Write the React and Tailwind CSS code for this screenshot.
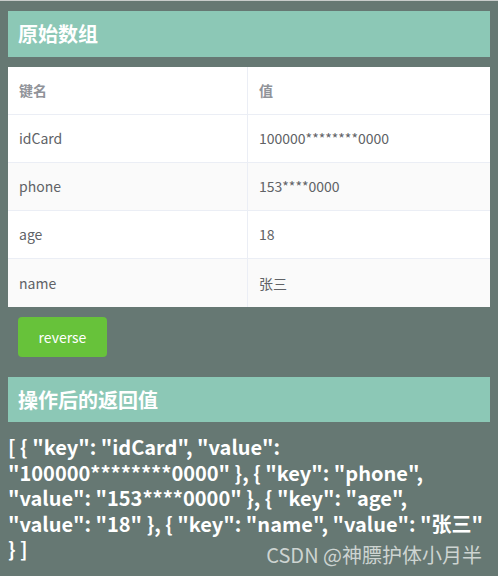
import React, { useState } from "react";

const initial = [
  { key: "idCard", value: "100000********0000" },
  { key: "phone", value: "153****0000" },
  { key: "age", value: "18" },
  { key: "name", value: "张三" },
];

const font = { fontFamily: '"Noto Sans CJK SC", "Noto Sans", sans-serif' };

const App = () => {
  const [list] = useState(initial);
  const [result, setResult] = useState(initial);

  const json = "[ " + result.map((r) => `{ "key": "${r.key}", "value": "${r.value}" }`).join(", ") + " ]";

  return (
    <div
      className="relative min-h-[576px] bg-[#667873] border-t border-[#c8cccb] px-2 pt-[10px]"
      style={font}
    >
      {/* Header */}
      <div className="h-[46px] bg-[#8cc8b6] flex items-center px-[10px]">
        <h2 className="text-[20px] font-bold text-white">原始数组</h2>
      </div>

      {/* Table */}
      <div className="mt-[10px] bg-white text-[14px]">
        <div className="flex h-12 border-b border-[#ebeef5]">
          <div className="w-[240px] border-r border-[#ebeef5] flex items-center px-[11px] font-bold text-[14px] text-[#909399]">
            键名
          </div>
          <div className="flex-1 flex items-center px-[11px] font-bold text-[14px] text-[#909399]">值</div>
        </div>
        {list.map((row, i) => (
          <div
            key={row.key}
            className={`flex h-12 ${i < list.length - 1 ? "border-b border-[#ebeef5]" : ""} ${i % 2 === 1 ? "bg-[#fafafa]" : "bg-white"}`}
          >
            <div className="w-[240px] border-r border-[#ebeef5] flex items-center px-[11px] text-[#606266]">
              {row.key}
            </div>
            <div className="flex-1 flex items-center px-[11px] text-[#606266]">{row.value}</div>
          </div>
        ))}
      </div>

      <div className="pl-[10px] pt-[10px]">
        <button
          onClick={() => setResult([...result].reverse())}
          className="w-[89px] h-10 rounded bg-[#67c23a] text-white text-[14px]"
        >
          reverse
        </button>
      </div>

      {/* Result header */}
      <div className="mt-5 h-[45px] bg-[#8cc8b6] flex items-center px-[10px]">
        <h2 className="text-[20px] font-bold text-white">操作后的返回值</h2>
      </div>

      <p className="pt-[12px] text-[20px] leading-[25.5px] font-bold text-white break-words">{json}</p>

      <div className="absolute right-4 bottom-[6px] text-[20px] text-[#d9dedc] opacity-90">CSDN @神膘护体小月半</div>
    </div>
  );
};

export default App;
